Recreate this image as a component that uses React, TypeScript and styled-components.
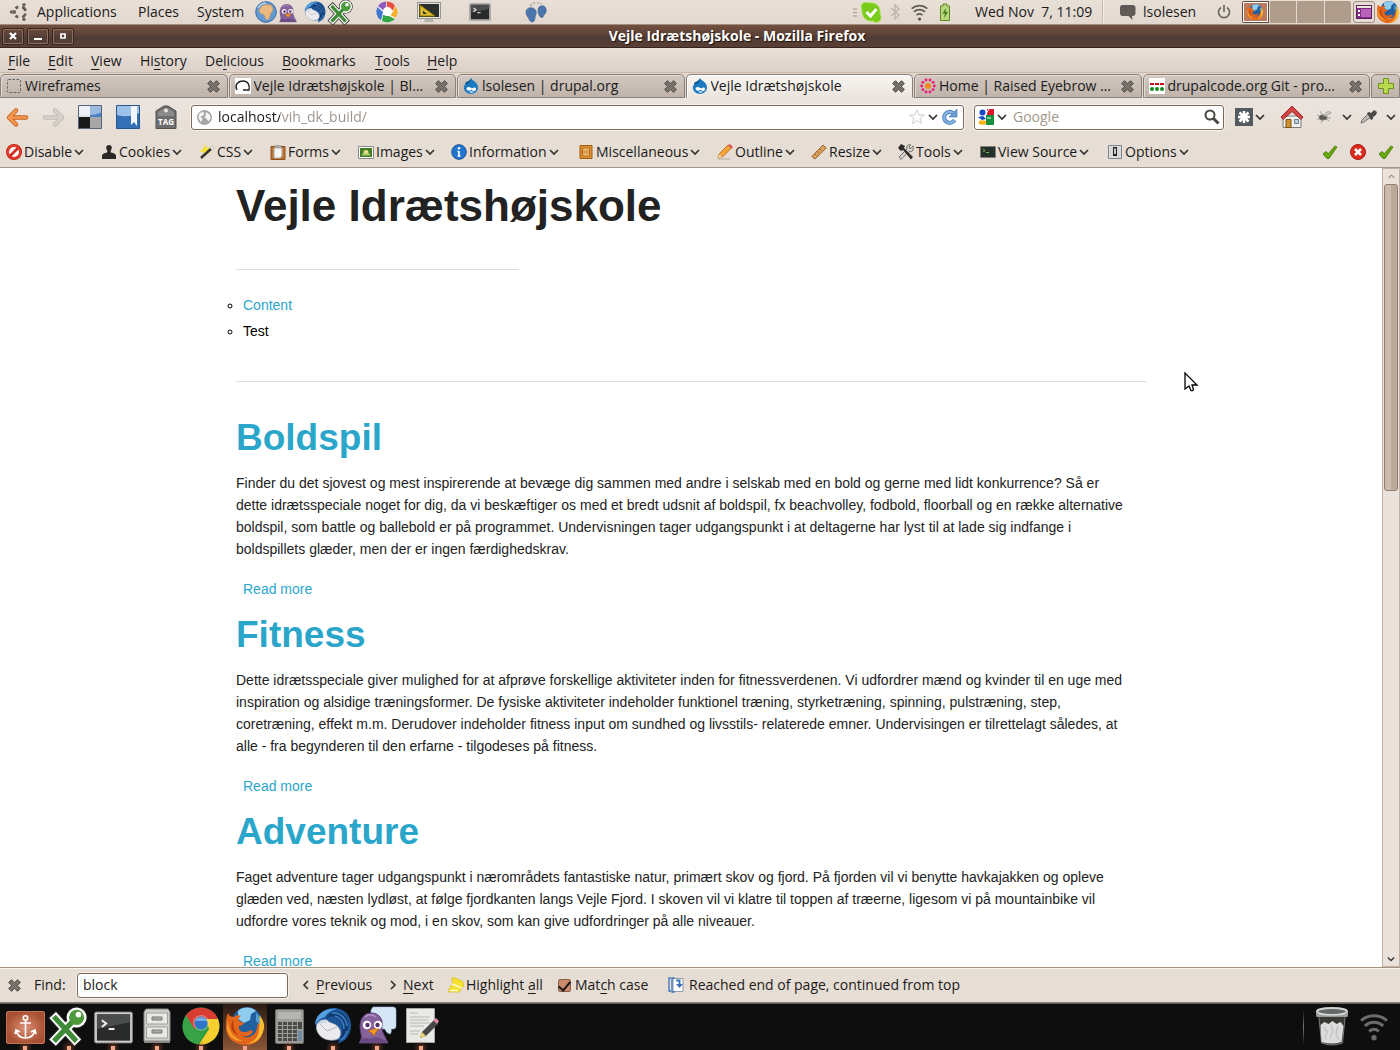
import React from "react";
import styled, { createGlobalStyle } from "styled-components";

const uiFont = '"Open Sans", "Noto Sans", sans-serif';
const pageFont = '"Liberation Sans", Arial, sans-serif';

const GlobalStyle = createGlobalStyle`
  * { box-sizing: border-box; }
  body { margin: 0; background: #0e0e0e; font-family: ${uiFont}; font-size: 14px; line-height: 20px; font-weight: 500; color: #1a1a1a; }
  button, input { font: inherit; color: inherit; }
  button { border: 0; background: none; padding: 0; margin: 0; }
  svg { display: block; flex: none; overflow: visible; }
`;

/* ---------- Shell ---------- */

const Desktop = styled.div`
  display: flex;
  flex-direction: column;
  height: 100vh;
  overflow: hidden;
`;

const TopPanel = styled.header`
  display: flex;
  justify-content: space-between;
  height: 25px;
  flex: none;
  background: linear-gradient(#e8dfd7, #e2d8cf);
  border-bottom: 1px solid #a08f80;
`;

const PanelGroup = styled.div`
  display: flex;
  align-items: center;
`;

const Slot = styled.div<{ $w: number; $center?: boolean }>`
  display: flex;
  align-items: center;
  justify-content: ${(p) => (p.$center ? "center" : "flex-start")};
  width: ${(p) => p.$w}px;
  flex: none;
  white-space: nowrap;
`;

const SlotButton = styled(Slot).attrs({ as: "button" })``;

const PanelRule = styled.span`
  width: 2px;
  height: 22px;
  border-left: 1px solid #c4b7aa;
  border-right: 1px solid #f4efea;
`;

const Workspaces = styled.div`
  display: grid;
  grid-template-columns: repeat(4, 1fr);
  gap: 1px;
  width: 109px;
  height: 22px;
  background: #e3d9cf;
  border-radius: 2px;
  overflow: hidden;
`;

const Workspace = styled.button<{ $active?: boolean }>`
  display: flex;
  align-items: center;
  justify-content: center;
  background: ${(p) => (p.$active ? "#bd7a5c" : "#b09c8b")};
  border: ${(p) => (p.$active ? "2px solid #fff" : "0")};
  outline: ${(p) => (p.$active ? "1px solid #5c4a40" : "none")};
  outline-offset: -1px;
`;

const WindowsButton = styled.button`
  display: flex;
  align-items: center;
  justify-content: center;
  width: 22px;
  height: 22px;
  margin: 0 2px;
  border: 1px solid #a08f80;
  border-radius: 3px;
  background: #e6dcd3;
`;

const TitleBar = styled.div`
  display: flex;
  align-items: center;
  height: 23px;
  flex: none;
  padding: 0 2px;
  background: linear-gradient(#74503f, #5c4238 45%, #503c34 55%, #593f35);
  border-bottom: 1px solid #38241f;
`;

const WindowButtons = styled.div`
  display: flex;
  gap: 3px;
  width: 74px;
`;

const WindowButton = styled.button`
  display: flex;
  align-items: center;
  justify-content: center;
  width: 22px;
  height: 17px;
  border: 1px solid #35231d;
  border-radius: 2px;
  box-shadow: inset 0 0 0 1px #8c6f61;
`;

const WindowTitle = styled.h1`
  flex: 1;
  margin: 0;
  text-align: center;
  font-size: 14px;
  line-height: 20px;
  font-weight: 700;
  color: #fff;
  text-shadow: 1px 1px 1px #1c100c;
`;

const MenuBar = styled.nav`
  display: flex;
  align-items: center;
  height: 25px;
  flex: none;
  padding: 2px 0 0 8px;
  background: linear-gradient(#e9dfd8, #ddd1c8);
  border-bottom: 1px solid #cdb9a8;

  u { text-underline-offset: 3px; }
`;

/* ---------- Tabs ---------- */

const TabStrip = styled.div`
  display: flex;
  height: 25px;
  flex: none;
  padding-top: 1px;
  gap: 1px;
  background: #e0d6cd;
`;

const Tab = styled.div<{ $active?: boolean }>`
  display: flex;
  align-items: center;
  flex: 1 1 0;
  min-width: 0;
  gap: 3px;
  padding: 0 7px 0 5px;
  border: 1px solid #8d8078;
  border-bottom: 1px solid ${(p) => (p.$active ? "#ece5df" : "#8d8078")};
  border-radius: 5px 5px 0 0;
  background: ${(p) => (p.$active ? "linear-gradient(#f8f5f2, #ece5df)" : "linear-gradient(#d2c8c0, #bfb3aa)")};
  box-shadow: inset 1px 1px 0 ${(p) => (p.$active ? "#fff" : "#e2dad3")};
`;

const TabLabel = styled.span`
  flex: 1;
  min-width: 0;
  overflow: hidden;
  white-space: nowrap;
`;

const NewTab = styled.button`
  display: flex;
  align-items: center;
  justify-content: center;
  width: 29px;
  border: 1px solid #8d8078;
  border-radius: 5px 5px 0 0;
  background: linear-gradient(#d2c8c0, #bfb3aa);
`;

/* ---------- Toolbars ---------- */

const NavBar = styled.div`
  display: flex;
  align-items: center;
  height: 38px;
  flex: none;
  padding-left: 6px;
  background: linear-gradient(#ece5df, #e6ddd4);
`;

const Field = styled.div<{ $w?: number }>`
  display: flex;
  align-items: center;
  gap: 6px;
  height: 25px;
  flex: ${(p) => (p.$w ? "none" : "1")};
  width: ${(p) => (p.$w ? `${p.$w}px` : "auto")};
  min-width: 0;
  padding: 0 5px;
  border: 1px solid #7c6a5c;
  border-radius: 3px;
  background: #fff;
  box-shadow: 0 0 0 1px #f5f1ed;
`;

const SearchField = styled(Field)`
  padding: 0 3px;
`;

const FieldIcons = styled.div`
  display: flex;
  align-items: center;
  gap: 3px;
`;

const TextInput = styled.input`
  flex: 1;
  min-width: 0;
  width: 100%;
  padding: 0;
  border: 0;
  outline: 0;
  background: transparent;
  &::placeholder { color: #a3978c; opacity: 1; }
`;

const UrlInput = styled(TextInput)`
  color: transparent;
  background: linear-gradient(90deg, #1a1a1a 62px, #9a918a 62px);
  background-clip: text;
  -webkit-background-clip: text;
`;

const NavTail = styled.div`
  display: flex;
  align-items: center;
  padding-left: 10px;
`;

const DevBar = styled.div`
  display: flex;
  align-items: center;
  justify-content: space-between;
  height: 32px;
  flex: none;
  padding: 0 6px;
  background: #e6ddd4;
  border-bottom: 1px solid #a39382;
`;

const DevItem = styled.button<{ $w: number }>`
  display: flex;
  align-items: center;
  gap: 2px;
  width: ${(p) => p.$w}px;
  white-space: nowrap;
`;

const Status = styled.div`
  display: flex;
  gap: 12px;
`;

/* ---------- Document ---------- */

const Viewport = styled.div`
  position: relative;
  display: flex;
  flex: 1;
  min-height: 0;
  background: #fff;
`;

const Document = styled.main`
  flex: 1;
  min-width: 0;
  overflow: hidden;
  font-family: ${pageFont};
  font-weight: 400;
  color: #222;
`;

const Column = styled.div`
  max-width: 910px;
  margin: 0 auto;
`;

const SiteTitle = styled.h1`
  margin: 0;
  padding-top: 14px;
  font-size: 44px;
  line-height: 48px;
`;

const Rule = styled.hr<{ $short?: boolean }>`
  width: ${(p) => (p.$short ? "283px" : "100%")};
  margin: ${(p) => (p.$short ? "39px 0 22px" : "37px 0 32px")};
  border: 0;
  border-top: 1px solid #ddd;
`;

const NavList = styled.ul`
  margin: 0;
  padding: 0 0 0 7px;
  list-style: circle;
  color: #000;
  line-height: 26px;
`;

const Link = styled.a`
  color: #2ba6cb;
  text-decoration: none;
`;

const Article = styled.article``;

const ArticleTitle = styled.h2`
  margin: 0;
  padding-bottom: 10px;
  font-size: 37px;
  line-height: 48px;
`;

const Paragraph = styled.p`
  margin: 0 0 18px;
  line-height: 22px;
`;

const ReadMore = styled.p`
  margin: 0 0 11px;
  padding-left: 7px;
  line-height: 22px;
`;

const ScrollBar = styled.div`
  display: flex;
  flex-direction: column;
  width: 18px;
  padding: 0 1px;
  border: 1px solid #c3b2a3;
  background: #ebe2dc;
`;

const ScrollButton = styled.button`
  display: flex;
  align-items: center;
  justify-content: center;
  height: 15px;
`;

const Track = styled.div`
  flex: 1;
`;

const Thumb = styled.div`
  height: 40%;
  border: 1px solid #8f7d6f;
  border-radius: 3px;
  background: linear-gradient(90deg, #cbbcaf 50%, #bba99a 50%);
`;

const Pointer = styled.div`
  position: absolute;
  left: 1184px;
  top: 204px;
`;

/* ---------- Find bar and dock ---------- */

const FindBar = styled.form`
  display: flex;
  align-items: center;
  height: 36px;
  flex: none;
  padding-left: 8px;
  border-top: 1px solid #a39382;
  border-bottom: 1px solid #8c7c6e;
  background: #e6ddd4;
  box-shadow: inset 0 1px 0 #f8f5f2;

  u { text-underline-offset: 3px; }
`;

const FindLabel = styled.label`
  width: 43px;
`;

const FindField = styled(Field)`
  margin-right: 13px;
`;

const FindAction = styled.button<{ $w: number; $gap?: number }>`
  display: flex;
  align-items: center;
  gap: ${(p) => p.$gap ?? 5}px;
  width: ${(p) => p.$w}px;
  white-space: nowrap;
`;

const CheckLabel = styled.label`
  display: flex;
  align-items: center;
  gap: 4px;
  width: 110px;
`;

const CheckBox = styled.input`
  appearance: none;
  width: 13px;
  height: 13px;
  margin: 0;
  border: 1px solid #8d5f4a;
  border-radius: 2px;
  background: #cc8a6c;
  display: grid;
  place-content: center;
  &:checked::before {
    content: "";
    width: 5px;
    height: 10px;
    border: solid #1a1a1a;
    border-width: 0 2px 2px 0;
    transform: rotate(40deg);
  }
`;

const FindMessage = styled.output`
  display: flex;
  align-items: center;
  gap: 5px;
  white-space: nowrap;
`;

const Dock = styled.footer`
  display: flex;
  justify-content: space-between;
  height: 47px;
  flex: none;
  padding: 0 0 0 3px;
  background: #0e0e0e;
  border-top: 1px solid #5d6560;
`;

const DockGroup = styled.div`
  display: flex;
  align-items: stretch;
`;

const DockItem = styled.button<{ $active?: boolean }>`
  display: flex;
  flex-direction: column;
  align-items: center;
  justify-content: space-between;
  width: 44px;
  padding-top: 3px;
  background: ${(p) => (p.$active ? "linear-gradient(#2a1a12, #8a5638)" : "none")};
`;

const RunningDot = styled.span`
  width: 4px;
  height: 4px;
  background: #f0a588;
  box-shadow: 0 0 5px 1px #a65336;
`;

const Tray = styled.div`
  display: flex;
  align-items: center;
  gap: 12px;
  padding-right: 12px;
`;

const TrayRule = styled.span`
  width: 1px;
  height: 36px;
  background: linear-gradient(#0e0e0e, #777, #0e0e0e);
`;

/* ---------- Drawings ---------- */

type Box = { s?: number };

const Chevron = ({ dir = "down", c = "#333", s = 10 }: { dir?: string; c?: string; s?: number }) => {
  const d: Record<string, string> = {
    down: "M1 3l4 4 4-4",
    up: "M1 7l4-4 4 4",
    left: "M7 1L3 5l4 4",
    right: "M3 1l4 4-4 4",
  };
  return (
    <svg width={s} height={s} viewBox="0 0 10 10" fill="none" stroke={c} strokeWidth="1.7"><path d={d[dir]} /></svg>
  );
};

const CloseMark = () => (
  <svg width="13" height="13" viewBox="0 0 13 13">
    <path d="M3.5 .7l3 3 3-3 2.8 2.8-3 3 3 3-2.8 2.8-3-3-3 3L.7 9.5l3-3-3-3z" fill="#77716c" stroke="#4e4843" />
  </svg>
);

const UbuntuMark = () => (
  <svg width="20" height="20" viewBox="0 0 20 20" fill="none" stroke="#665f5a">
    <path d="M6.6 6.5A5.600 5.600 0 0 1 9.300 4.900M13.200 4.900A5.600 5.600 0 0 1 16.500 9M16.500 11.500A5.600 5.600 0 0 1 13.200 15.200M9.300 15.200A5.600 5.600 0 0 1 6.600 13.600M5.700 11.800A5.600 5.600 0 0 1 5.700 8.300" strokeWidth="2.800" />
    <g fill="#665f5a" stroke="none"><circle cx="2.500" cy="10" r="1.700" /><circle cx="15" cy="2.600" r="1.700" /><circle cx="15" cy="17.400" r="1.700" /></g>
  </svg>
);

const Globe = ({ s = 22, grey = false }: Box & { grey?: boolean }) => (
  <svg width={s} height={s} viewBox="0 0 22 22">
    <circle cx="11" cy="11" r="10.3" fill={grey ? "#a6a6a6" : "#6199d3"} stroke={grey ? "#8e8e8e" : "#356ba8"} />
    {grey ? (
      <path d="M3 6l4-3 4 1-2 4-4 2 3 3-2 5-4-6zM13 3l6 4 1 5-3 5-3-4-3-2 2-4z" fill="#f4f4f4" />
    ) : (
      <>
        <path d="M6 6c3-3 8-3 11-1l1 4-2 3-2 6-3 1-2-5-4-2-1-3z" fill="#eab880" stroke="#c08e55" strokeWidth=".6" />
        <path d="M3 7a10 10 0 0 1 8-5" fill="none" stroke="#fff" strokeWidth="1.5" opacity=".6" />
      </>
    )}
  </svg>
);

const Pidgin = ({ s = 22, bubble = false }: Box & { bubble?: boolean }) => (
  <svg width={s} height={s} viewBox="0 0 38 38">
    {bubble && <path d="M15 0h20q3 0 3 3v16q0 3-3 3h-2q1 3-1 5-4-1-5-5H13V3z" fill="#d5e6f7" stroke="#a3bfdc" strokeWidth=".6" />}
    <path d="M1 36c2-3 3-5 2-9C0 15 4 6 13 6c8 0 12 6 11 13-1 5 3 10 6 17z" fill="#85629b" stroke="#5b3d72" />
    <path d="M7 10c3-3 8-3 11 0" fill="none" stroke="#b294c6" strokeWidth="1.5" />
    <path d="M3 32c6-3 7 1 11-1s9 0 14 3l1 2H2z" fill="#694b82" />
    <circle cx="9" cy="18" r="4.2" fill="#fff" /><circle cx="20" cy="18" r="4.2" fill="#fff" />
    <circle cx="9.500" cy="18" r="2.2" fill="#553270" /><circle cx="19.500" cy="18" r="2.2" fill="#553270" />
    <path d="M10 24l5-2 6 0-3 3-2 4-2-3z" fill="#f29a22" stroke="#ba5d0d" strokeWidth=".7" />
  </svg>
);

const Thunderbird = ({ s = 22 }: Box) => (
  <svg width={s} height={s} viewBox="0 0 38 38">
    <path d="M7 6C14-1 28-1 34 8c5 8 4 18-3 25l-7 4 1-4C17 35 8 32 4 25 0 19 2 11 7 6z" fill="#1d5496" />
    <path d="M1 18C1 8 11 0 23 2c-6 1-10 4-12 8-4 1-7 3-10 8z" fill="#55a1df" />
    <path d="M3 17c2-4 7-5 10-4 2 3 6 3 9 5 5 4 6 9 3 13-4 3-11 3-16 0-5-3-8-9-6-14z" fill="#ebebed" stroke="#9da8b7" strokeWidth=".6" />
    <path d="M5 16l8 8 10-4" fill="none" stroke="#b4b6bc" />
    <path d="M3 17c3-3 7-4 10-4l-1 3z" fill="#c9d6e6" />
    <path d="M12 11c7-4 14 0 16 7 1 5 0 10-3 14 8-3 11-12 8-20C29 3 18 3 12 11z" fill="#12396e" />
    <path d="M18 6c8-1 14 5 15 13M21 9c6 2 9 7 9 13M33 24c-1 4-3 7-6 9" fill="none" stroke="#3d83ca" strokeWidth="1.5" />
  </svg>
);

const XMark = ({ s = 24 }: Box) => (
  <svg width={s} height={s} viewBox="0 0 40 40">
    <g fill="none" strokeLinecap="square">
      <path d="M6 12l20 22M6 34l20-21" stroke="#222" strokeWidth="12" />
      <circle cx="28" cy="11" r="11.5" fill="#222" />
      <path d="M6 12l20 22M6 34l20-21" stroke="#fff" strokeWidth="9.5" />
      <circle cx="28" cy="11" r="10.5" fill="#fff" />
      <path d="M6 12l20 22M6 34l20-21" stroke="#3f8a36" strokeWidth="5.5" />
    </g>
    <circle cx="28" cy="11" r="8" fill="#4d9b3d" /><circle cx="30" cy="8" r="3" fill="#fff" />
  </svg>
);

const Picasa = () => (
  <svg width="22" height="22" viewBox="0 0 22 22">
    <circle cx="11" cy="11" r="10.5" fill="#fff" />
    <path d="M10 .5A10.500 10.500 0 0 0 2 5l6 5 2-4z" fill="#8f5bc0" />
    <path d="M10.500 .5a10.500 10.500 0 0 1 8.500 4l-2 5-6-3z" fill="#e74f43" />
    <path d="M19.500 5a10.500 10.500 0 0 1 0 12l-5-3 3-4z" fill="#f4ae28" />
    <path d="M19 18a10.500 10.500 0 0 1-13 2l1-6 6 1z" fill="#36a544" />
    <path d="M5 19.500A10.500 10.500 0 0 1 1.500 6L7 11z" fill="#4076ce" />
    <circle cx="11.500" cy="10.500" r="4.5" fill="#fff" />
  </svg>
);

const ScreenRuler = () => (
  <svg width="24" height="22" viewBox="0 0 24 22">
    <rect x=".5" y="1.500" width="23" height="16" fill="#e4e4e0" stroke="#96968f" />
    <rect x="2" y="3" width="20" height="13" fill="#2c2f2c" />
    <path d="M3 4l15 11H3z" fill="#dec02f" stroke="#8b7209" /><path d="M6 9.500l4 3.500H6z" fill="#2c2f2c" />
    <path d="M8 18h8l1 3H7z" fill="#b5b5b0" />
  </svg>
);

const Terminal = ({ w = 22, h = 18 }: { w?: number; h?: number }) => (
  <svg width={w} height={h} viewBox="0 0 40 33">
    <rect x=".7" y=".7" width="38.600" height="31.600" rx="1.500" fill="#cfcfcb" stroke="#8a8a86" />
    <rect x="3" y="3" width="34" height="27" fill="#292b2a" /><path d="M3 3h34v8L3 18z" fill="#4a4c4b" />
    <path d="M8 9l4.500 3.500L8 16M15 18h6" stroke="#f0f0f0" strokeWidth="2" fill="none" />
  </svg>
);

const Feet = () => (
  <svg width="22" height="22" viewBox="0 0 22 22">
    <path d="M1 11c0-5 8-6 10-1 1 3-1 4-1 7 0 5-5 5-6 1-1-2-3-4-3-7z" fill="#4b76ad" stroke="#34598b" strokeWidth=".6" />
    <path d="M13 9c0-5 7-6 8-1 1 4-2 5-3 8-3 2-5-3-5-7z" fill="#4b76ad" stroke="#34598b" strokeWidth=".6" />
    <g fill="#bdb7ae"><circle cx="6" cy="4" r="1.3" /><circle cx="9" cy="2" r="1.3" /><circle cx="13" cy="2" r="1.3" /><circle cx="16" cy="2.500" r="1" /></g>
  </svg>
);

const PhoneStatus = () => (
  <svg width="21" height="21" viewBox="0 0 21 21">
    <path d="M2 1c3-1 5 0 6 0 7-1 12 4 11 11 2 3 1 7-2 8-2 1-4 0-5-1C5 20 1 15 1 8 0 5 0 3 2 1z" fill="#79cc1b" stroke="#a6e356" />
    <path d="M5.500 10l4 4 6-7" fill="none" stroke="#fff" strokeWidth="3" />
  </svg>
);

const Bluetooth = () => (
  <svg width="10" height="16" viewBox="0 0 10 16" fill="none" stroke="#c0b8b0" strokeWidth="1.500"><path d="M1 4l8 7-4 4V1l4 4-8 7" /></svg>
);

const Wifi = ({ w = 17, c = "#625c57" }: { w?: number; c?: string }) => (
  <svg width={w} height={w} viewBox="0 0 26 26" fill="none" stroke={c} strokeWidth="2.7">
    <path d="M1 7c7-6 17-6 24 0M4.500 12c5-4.500 12-4.500 17 0M8.500 17c3-2.500 6-2.500 9 0" /><circle cx="13" cy="23" r="2.5" fill={c} stroke="none" />
  </svg>
);

const Battery = () => (
  <svg width="10" height="18" viewBox="0 0 10 18"><path d="M3 1h4v2h2.500v14.500h-9V3H3z" fill="#b9d67d" stroke="#5c8a20" /><path d="M6 5L2.500 10.500H5L4 15l4-6H5.500z" fill="#45791a" /></svg>
);

const Bubble = () => (
  <svg width="16" height="15" viewBox="0 0 16 15"><path d="M2.500 0h10q3 0 3 3v5q0 3-3 3H12l.5 4-4-4h-6q-2.500 0-2.500-3V3q0-3 2.500-3z" fill="#5f5a56" /></svg>
);

const Power = () => (
  <svg width="14" height="14" viewBox="0 0 14 14" fill="none" stroke="#6d6762" strokeWidth="1.700"><path d="M4 2.500a5.500 5.500 0 1 0 6 0M7 0v7" /></svg>
);

const Firefox = ({ s = 22 }: Box) => (
  <svg width={s} height={s} viewBox="0 0 38 38">
    <circle cx="21" cy="15" r="15" fill="#225f9f" />
    <path d="M12 4c6-5 14-4 18 0l-5 3-1 6-6 3-6-4z" fill="#8fcdf0" />
    <path d="M30 6c3 2 5 7 4 12l-4-4z" fill="#4f9cd6" />
    <path d="M2 6c1 3 3 4 6 4 2-2 5-2 7-1-2 1-3 3-2 5l5 2c-1 2-3 3-5 3-1 4 3 7 7 6 3-1 5-2 7-1-1 4-6 6-11 5 7 4 14-1 15-8l1-5c4 3 5 8 4 12-3 7-9 10-16 10C8 38 0 30 0 21 0 15 0 10 2 6z" fill="#e5661a" />
    <path d="M33 8c5 5 7 12 3 19-3 7-10 10-16 10 9-2 13-8 13-15 1-5 1-10 0-14z" fill="#f9bd32" />
    <path d="M2 13c0 10 5 18 15 21C8 35 1 28 1 20z" fill="#f6a02a" />
    <path d="M8 12c-2 6 0 13 5 16-8-2-10-10-5-16z" fill="#b63b12" />
  </svg>
);

const WindowList = () => (
  <svg width="16" height="14" viewBox="0 0 16 14"><rect x=".5" y=".5" width="15" height="13" fill="#7d2c84" stroke="#5c1f62" /><path d="M1 1h14v2H1z" fill="#ede8da" /><path d="M2 5h2v2H2zM2 9h2v2H2z" fill="#fff" /><path d="M5 4h10v8H5z" fill="#ba62b9" /></svg>
);

const Dashed = () => (
  <svg width="16" height="16" viewBox="0 0 16 16"><rect x="1.500" y="1.500" width="13" height="13" rx="1" fill="none" stroke="#65605b" strokeDasharray="2.500 1.500" /></svg>
);

const Arch = () => (
  <svg width="16" height="16" viewBox="0 0 16 16"><path d="M0 0h16v16H0z" fill="#fff" /><path d="M2 12C-1 6 4 3 8 3c5 0 7 4 6 9H8" fill="none" stroke="#222" strokeWidth="1.500" /></svg>
);

const Drupal = () => (
  <svg width="16" height="16" viewBox="0 0 16 16"><path d="M8 0c1 3 7 4 7 9.500C15 13 12 16 8 16S.8 13 .8 9.500C1 5 7 4 8 0z" fill="#1b7ac2" /><path d="M2 5c3-2 5-2 6-5 0 4-3 6-5 7z" fill="#075892" /><path d="M3.500 10c2-2 4-1 5.500.5 2-1.500 4-1.500 4 .5 0 3-3 2-4.500.7-2 1.500-5 1.500-5-1.700zM6 14c2-1 3-1 5 0-2 1-3 1-5 0z" fill="#fff" /></svg>
);

const Sunburst = () => (
  <svg width="16" height="16" viewBox="0 0 16 16">
    {Array.from({ length: 10 }, (_, i) => {
      const a = (i * Math.PI) / 5;
      return <circle key={i} cx={8 + 6.3 * Math.cos(a)} cy={8 + 6.3 * Math.sin(a)} r="1.4" fill="#ec1c76" />;
    })}
    <circle cx="8" cy="8" r="3" fill="#f58a1f" />
  </svg>
);

const GitMark = () => (
  <svg width="16" height="16" viewBox="0 0 16 16"><path d="M0 0h16v16H0z" fill="#fff" /><path d="M1 6h14" stroke="#c30d1c" strokeWidth="2" strokeDasharray="4 1" /><g fill="#12891c"><circle cx="3" cy="11" r="2" /><circle cx="8" cy="11" r="2" /><circle cx="13" cy="11" r="2" /></g></svg>
);

const Plus = () => (
  <svg width="16" height="16" viewBox="0 0 16 16"><path d="M5.500 .5h5v5h5v5h-5v5h-5v-5h-5v-5h5z" fill="#b8d84e" stroke="#6d9221" /></svg>
);

const Arrow = ({ off = false }: { off?: boolean }) => (
  <svg width="23" height="19" viewBox="0 0 23 19" fill="none" strokeLinecap="round" strokeLinejoin="round">
    <g transform={off ? "translate(23 0) scale(-1 1)" : undefined}>
      <path d="M10 2.500L3 9.500l7 7M4 9.500h16" stroke={off ? "#c2b9b2" : "#c9601d"} strokeWidth="4.500" />
      <path d="M10 2.500L3 9.500l7 7M4 9.500h16" stroke={off ? "#d8d0ca" : "#f49650"} strokeWidth="2.700" />
    </g>
  </svg>
);

const Checker = () => (
  <svg width="24" height="24" viewBox="0 0 24 24"><path d="M0 0h12v12H0z" fill="#e0e6ee" /><path d="M12 0h12v12H12z" fill="#4b82c6" /><path d="M0 12h12v12H0z" fill="#181818" /><path d="M12 12h12v12H12z" fill="#a7a7a7" /><path d="M0 0h24v7C15 11 8 11 0 9z" fill="#fff" opacity=".45" /><path d="M.5 .5h23v23H.5z" fill="none" stroke="#556579" /></svg>
);

const BookmarkTile = () => (
  <svg width="24" height="24" viewBox="0 0 24 24"><path d="M.5 .5h23v23H.5z" fill="#3470b6" stroke="#285691" /><path d="M1 1h22v7C15 12 8 12 1 10z" fill="#9dc2e9" /><path d="M15 1h6v20l-3-4-3 3z" fill="#f3f7fb" /></svg>
);

const TagTile = () => (
  <svg width="22" height="24" viewBox="0 0 22 24">
    <path d="M1 6l8-5h4l8 5v17.500H1z" fill="#6d6d6d" stroke="#515151" /><path d="M3 7l7-4h2l7 4v4H3z" fill="#8a8a8a" /><circle cx="11" cy="5.500" r="2" fill="#ece5df" />
    <text x="11" y="20" textAnchor="middle" fontSize="8" fontWeight="700" fontFamily="Open Sans, sans-serif" fill="#fff">TAG</text>
  </svg>
);

const Star = () => (
  <svg width="16" height="16" viewBox="0 0 16 16"><path d="M8 1l2 5h5.300l-4.200 3.400 1.500 5.300L8 11.600l-4.600 3.100 1.500-5.300L.7 6H6z" fill="#fff" stroke="#cfcfcf" /></svg>
);

const Reload = () => (
  <svg width="17" height="17" viewBox="0 0 17 17"><path d="M13.500 11A5.500 5.500 0 1 1 12 4" fill="none" stroke="#4a7ebb" strokeWidth="4" /><path d="M13.500 11A5.500 5.500 0 1 1 12 4" fill="none" stroke="#88b3e2" strokeWidth="2.200" /><path d="M16 0v8H8z" fill="#6c9cd2" stroke="#4a7ebb" strokeWidth=".7" /></svg>
);

const SearchEngine = () => (
  <svg width="16" height="16" viewBox="0 0 16 16"><path d="M0 0h8v16H0z" fill="#fff" /><path d="M9 0h7v6H9z" fill="#e2122d" /><path d="M8 6h8v10H8z" fill="#13913e" /><circle cx="4.500" cy="3.500" r="3" fill="#1549c8" /><path d="M0 8l5-1 3 3-4 1z" fill="#1549c8" /><ellipse cx="4.500" cy="13.500" rx="3.800" ry="2.300" fill="#f5b516" /><path d="M8 5l3-5M9 9l4 0" stroke="#fff" /></svg>
);

const Magnifier = () => (
  <svg width="16" height="16" viewBox="0 0 16 16" fill="none" stroke="#4a4642"><circle cx="6" cy="6" r="4.500" strokeWidth="2" /><path d="M9.500 9.500l5 5" strokeWidth="3" /></svg>
);

const Asterisk = () => (
  <svg width="18" height="18" viewBox="0 0 18 18"><path d="M0 0h18v18H0z" fill="#535b61" /><path d="M9 3v12M3 9h12M4.500 4.500l9 9M13.500 4.500l-9 9" stroke="#fff" strokeWidth="2.500" /></svg>
);

const Home = () => (
  <svg width="24" height="24" viewBox="0 0 24 24"><path d="M3 11h18v11.500H3z" fill="#efefed" stroke="#7d7d79" /><path d="M12 1l11 11-2 2.500-9-8-9 8L1 12z" fill="#d34545" stroke="#9b2626" /><path d="M6 14.500h5v8H6z" fill="#cf912c" stroke="#7e540c" /><path d="M14.500 14.500h4v4h-4z" fill="#b7d1e8" stroke="#6b7e8e" /></svg>
);

const Bug = () => (
  <svg width="16" height="14" viewBox="0 0 16 14" fill="none" stroke="#a39f9b"><path d="M1 5l5 2-5 3M4 1l3 5M15 8l-5 0M13 11l-4-3M5 13l2-4" /><ellipse cx="7" cy="7.500" rx="4" ry="2.500" fill="#5d5a57" stroke="#77736f" /><path d="M8 6c2-5 6-5 7-3l-5 3z" fill="#d5d2cf" /></svg>
);

const Dropper = () => (
  <svg width="17" height="14" viewBox="0 0 17 14"><path d="M1 13l1-3 6-6 3 3-7 5z" fill="#bdbab6" stroke="#77736f" /><path d="M7 3l2-1 2 1 3-3 3 2-1 3-3 2 0 2-2 1z" fill="#4b4845" /></svg>
);

const Check = () => (
  <svg width="16" height="16" viewBox="0 0 16 16"><path d="M1 10l2.500-2.500 3 2L13 2l2 1L7 14.500H5z" fill="#65a80c" stroke="#3f7300" strokeWidth=".8" /></svg>
);

const ErrorDot = () => (
  <svg width="16" height="16" viewBox="0 0 16 16"><circle cx="8" cy="8" r="7.500" fill="#dc2a1c" stroke="#ad1a10" /><path d="M5 5l6 6M11 5l-6 6" stroke="#fff" strokeWidth="2.500" /></svg>
);

const devIcons: Record<string, React.ReactNode> = {
  Disable: <><circle cx="8" cy="8" r="6.500" fill="#fff" stroke="#bc1d10" strokeWidth="3" /><circle cx="8" cy="8" r="6.300" fill="none" stroke="#ec4031" strokeWidth="1.800" /><path d="M4 12l8-8" stroke="#d62a1c" strokeWidth="2.600" /></>,
  Cookies: <path d="M8 1c3 0 3.500 3 2 5-1 2 0 3 2 3 2 .5 3 1.500 3 3v3H1v-3c0-1.500 1-2.500 3-3 2 0 3-1 2-3-1.500-2-1-5 2-5z" fill="#2b2927" />,
  CSS: <><path d="M6 0l1.500 4 4-1-3 3 3 3.500-4-1L5 12l-.5-4L0 7l4-2z" fill="#f8df37" /><path d="M2 14L14 3" stroke="#393530" strokeWidth="2.500" /><path d="M12 5l2-2" stroke="#f3f3f3" strokeWidth="2.500" /></>,
  Forms: <><path d="M1 2.500h14v13H1z" fill="#c07431" stroke="#8c4f17" /><path d="M4 4h8v8l-2 2H4z" fill="#f5f5f3" stroke="#aaa" /><path d="M5 1h6v3H5z" fill="#a9a9a5" /></>,
  Images: <><path d="M.5 2.500h15v12H.5z" fill="#fff" stroke="#888" /><path d="M2 4h12v9H2z" fill="#437d26" /><circle cx="8" cy="8.500" r="2.500" fill="#e9e28b" /><path d="M4 10.500h8" stroke="#a7cc72" strokeWidth="2" /></>,
  Information: <><circle cx="8" cy="8" r="7.300" fill="#2376ce" stroke="#135096" /><path d="M8 7v5M6.500 7.500H8M6.500 12h3" stroke="#fff" strokeWidth="1.700" /><circle cx="8" cy="4.200" r="1.200" fill="#fff" /></>,
  Miscellaneous: <><path d="M2 1.500h12v13H2z" fill="#dc8f35" stroke="#a45c12" /><path d="M4.500 4h7v8h-7z" fill="#f1bd70" stroke="#b56c1d" /><path d="M5 7h6M5 9h6" stroke="#b56c1d" strokeWidth=".7" /></>,
  Outline: <><path d="M2 15h11" stroke="#b5aaa0" /><path d="M1 14.500l1.500-5L11 1l3.500 3L6 12.500z" fill="#f6a437" stroke="#b86712" strokeWidth=".8" /><path d="M11 1l2-1 3 3-1.500 1.500z" fill="#d9535a" /><path d="M1 14.500l1.500-4 2.500 2.500z" fill="#f3dcb6" /></>,
  Resize: <><path d="M.8 12.500L12 1l3.300 3L4 15z" fill="#dda45f" stroke="#9a642a" /><path d="M4 10l1.500 1.500M6.500 7.500L8 9M9 5l1.500 1.500" stroke="#85531d" /></>,
  Tools: <><path d="M15 2l-3 3-1-2 2-2c-3-1-5 1-4 4l-8 8 2 2.500 8-8c3 1 5-1 4-5.500z" fill="#d3d1ce" stroke="#5b5855" strokeWidth=".8" /><path d="M0 4l3-4 4 2-1 2 9 9-2 2.500L5 6 3 7z" fill="#2e2c2a" /></>,
  "View Source": <><path d="M.5 2.500h15v11H.5z" fill="#26302a" stroke="#7f7f7b" /><path d="M3 5l2 1.500L3 8M6 8.500h3" stroke="#70bd52" fill="none" /></>,
  Options: <><path d="M1.500 1.500h13v13h-13z" fill="#d9d9dc" stroke="#85858a" /><path d="M6 3h4v9H6z" fill="#222" /><path d="M7.200 4.500h1.600V10H7.200z" fill="#f3f3f3" /></>,
};

const Highlighter = () => (
  <svg width="16" height="16" viewBox="0 0 16 16"><path d="M4 1q1-1 3 0l7 3q2 2 1.500 5l-3 4-1 2H1q-.500-2 .500-4l3-4z" fill="#f6e032" stroke="#d8bf26" strokeWidth=".8" /><path d="M4 7l10 4M2 13.500h8" stroke="#fffbd0" strokeWidth="1.500" /></svg>
);

const WrapIcon = () => (
  <svg width="16" height="16" viewBox="0 0 16 16"><path d="M5 1.500h10v13H5z" fill="#fff" stroke="#8f9aa9" /><path d="M3 1H1v13h2M6.500 1H4v14h2.500" fill="none" stroke="#3f74b7" strokeWidth="1.300" /><path d="M8 3.500h3.500v4" fill="none" stroke="#3f74b7" strokeWidth="2" /><path d="M8 7h7l-3.500 4z" fill="#3f74b7" /></svg>
);

const Anchor = () => (
  <svg width="39" height="38" viewBox="0 0 39 38">
    <defs><radialGradient id="anchorGlow"><stop stopColor="#dd9077" /><stop offset="1" stopColor="#a85132" /></radialGradient></defs>
    <rect x=".5" y="4.500" width="38" height="32" rx="1.500" fill="url(#anchorGlow)" stroke="#c47356" />
    <g fill="none" stroke="#fff" strokeWidth="1.600"><circle cx="19.500" cy="11" r="2.200" /><path d="M19.500 13v17M14 16h11M10 23c1 5 4 8 9.500 8s8.500-3 9.500-8M9 27l1-4 4 2M30 27l-1-4-4 2" /></g>
  </svg>
);

const Cabinet = () => (
  <svg width="38" height="38" viewBox="0 0 38 38"><path d="M8 2h22l2 3v29H6V5z" fill="#cfcfca" stroke="#888884" /><path d="M8.500 6h21v11h-21zM8.500 20h21v11h-21z" fill="#e8e8e4" stroke="#a1a19c" /><path d="M14 10h10v3H14zM14 23h10v3H14z" fill="#aaa9a4" stroke="#777" /><path d="M6 34h26v2H6z" fill="#888884" /></svg>
);

const Chrome = () => (
  <svg width="38" height="38" viewBox="0 0 38 38">
    <circle cx="19" cy="19" r="18.500" fill="#2f9a3f" />
    <path d="M3 10A18.500 18.500 0 0 1 36 12H19l-8 12z" fill="#d93d31" />
    <path d="M36 12A18.500 18.500 0 0 1 17 37.500L27 22l-3-10z" fill="#f7d02f" />
    <path d="M4 8l9 15 4 3 5 0-6 11.500C1 35-3 20 4 8z" fill="#36a446" />
    <circle cx="19" cy="16" r="8" fill="#f1f1ef" opacity=".35" /><circle cx="19" cy="16" r="6.500" fill="#2d75c9" /><path d="M13 14c2-5 10-5 12 0z" fill="#74adea" />
  </svg>
);

const Calculator = () => (
  <svg width="38" height="38" viewBox="0 0 38 38">
    <rect x="5.500" y="2.500" width="28" height="34" rx="1.500" fill="#9d9d99" stroke="#6d6d6a" /><path d="M8 5h23v7H8z" fill="#b4b6b0" />
    {[0, 1, 2, 3, 4].map((r) => [0, 1, 2, 3].map((c) => <rect key={`${r}${c}`} x={8 + c * 5} y={15 + r * 4} width="4" height="3" fill="#4a4a48" />))}
    <path d="M28 15h4v7h-4z" fill="#4a4a48" /><path d="M28 24h4v10h-4z" fill="#6f8aa3" />
  </svg>
);

const Editor = () => (
  <svg width="38" height="38" viewBox="0 0 38 38">
    <path d="M4.500 1.500h28v34h-28z" fill="#e9e9e6" stroke="#a9a9a5" />
    <path d="M8 6h8M8 10h20M8 13h18M8 16h20M8 19h14M8 24h10M8 27h8" stroke="#c9c9c4" strokeWidth="1.500" />
    <path d="M18 31l2-6 12-12 4 4-12 12z" fill="#474747" /><path d="M18 31l2-6 4 4z" fill="#efd36b" /><path d="M31 13l3-2 3 3-2 3z" fill="#dc89ad" />
  </svg>
);

const Trash = () => (
  <svg width="32" height="40" viewBox="0 0 32 40">
    <path d="M2.500 6h27l-3 30q-10 4-21 0z" fill="#363936" stroke="#787b78" />
    <path d="M4.500 18l4-3 4 2 4-3 4 3 4-2 3 4-2 16q-10 3-20 0z" fill="#dcdddb" />
    <path d="M8 20l3 5-2 7M15 18l2 6-3 8M22 19l-2 8 3 6" stroke="#c3c6c4" fill="none" strokeWidth="1.500" />
    <ellipse cx="16" cy="4.500" rx="15" ry="3.500" fill="#656966" stroke="#d2d4d2" strokeWidth="2" />
    <path d="M1 5v4h30V5" fill="none" stroke="#b5b8b5" strokeWidth="1.500" />
  </svg>
);

const Cursor = () => (
  <svg width="14" height="20" viewBox="0 0 14 20"><path d="M1 1v16l4-3 2 4.500q1.500 1 2.500-1L8 13h5z" fill="#fff" stroke="#000" strokeWidth="1.300" /></svg>
);

/* ---------- Content ---------- */

const Mnemonic = ({ text, at }: { text: string; at: number }) => (
  <span>{text.slice(0, at)}<u>{text[at]}</u>{text.slice(at + 1)}</span>
);

const menus: [string, number, number][] = [
  ["File", 0, 40], ["Edit", 0, 43], ["View", 0, 49], ["History", 2, 65], ["Delicious", 2, 77], ["Bookmarks", 0, 93], ["Tools", 0, 52], ["Help", 0, 40],
];

const tabs: { icon: React.ReactNode; title: string; active?: boolean }[] = [
  { icon: <Dashed />, title: "Wireframes" },
  { icon: <Arch />, title: "Vejle Idrætshøjskole | Bl…" },
  { icon: <Drupal />, title: "lsolesen | drupal.org" },
  { icon: <Drupal />, title: "Vejle Idrætshøjskole", active: true },
  { icon: <Sunburst />, title: "Home | Raised Eyebrow …" },
  { icon: <GitMark />, title: "drupalcode.org Git - pro…" },
];

const devTools: [string, number][] = [
  ["Disable", 95], ["Cookies", 98], ["CSS", 71], ["Forms", 88], ["Images", 93], ["Information", 127], ["Miscellaneous", 139], ["Outline", 94], ["Resize", 87], ["Tools", 82], ["View Source", 127], ["Options", 86],
];

const articles = [
  {
    title: "Boldspil",
    lines: [
      "Finder du det sjovest og mest inspirerende at bevæge dig sammen med andre i selskab med en bold og gerne med lidt konkurrence? Så er",
      "dette idrætsspeciale noget for dig, da vi beskæftiger os med et bredt udsnit af boldspil, fx beachvolley, fodbold, floorball og en række alternative",
      "boldspil, som battle og ballebold er på programmet. Undervisningen tager udgangspunkt i at deltagerne har lyst til at lade sig indfange i",
      "boldspillets glæder, men der er ingen færdighedskrav.",
    ],
  },
  {
    title: "Fitness",
    lines: [
      "Dette idrætsspeciale giver mulighed for at afprøve forskellige aktiviteter inden for fitnessverdenen. Vi udfordrer mænd og kvinder til en uge med",
      "inspiration og alsidige træningsformer. De fysiske aktiviteter indeholder funktionel træning, styrketræning, spinning, pulstræning, step,",
      "coretræning, effekt m.m. Derudover indeholder fitness input om sundhed og livsstils- relaterede emner. Undervisingen er tilrettelagt således, at",
      "alle - fra begynderen til den erfarne - tilgodeses på fitness.",
    ],
  },
  {
    title: "Adventure",
    lines: [
      "Faget adventure tager udgangspunkt i nærområdets fantastiske natur, primært skov og fjord. På fjorden vil vi benytte havkajakken og opleve",
      "glæden ved, næsten lydløst, at følge fjordkanten langs Vejle Fjord. I skoven vil vi klatre til toppen af træerne, ligesom vi på mountainbike vil",
      "udfordre vores teknik og mod, i en skov, som kan give udfordringer på alle niveauer.",
    ],
  },
];

const dockItems: { name: string; icon: React.ReactNode; active?: boolean }[] = [
  { name: "Docky", icon: <Anchor /> },
  { name: "Launcher", icon: <XMark s={38} /> },
  { name: "Terminal", icon: <svg width="39" height="38" viewBox="0 0 39 38"><g transform="translate(0 4)"><Terminal w={39} h={33} /></g></svg> },
  { name: "Files", icon: <Cabinet /> },
  { name: "Chrome", icon: <Chrome /> },
  { name: "Firefox", icon: <Firefox s={38} />, active: true },
  { name: "Calculator", icon: <Calculator /> },
  { name: "Thunderbird", icon: <Thunderbird s={38} /> },
  { name: "Pidgin", icon: <Pidgin s={38} bubble /> },
  { name: "Text editor", icon: <Editor /> },
];

export default function App() {
  return (
    <Desktop>
      <GlobalStyle />
      <TopPanel>
        <PanelGroup>
          <Slot $w={37} $center><UbuntuMark /></Slot>
          <SlotButton $w={101}>Applications</SlotButton>
          <SlotButton $w={59}>Places</SlotButton>
          <SlotButton $w={57}>System</SlotButton>
          <Slot $w={24} $center><Globe /></Slot>
          <Slot $w={24} $center><Pidgin /></Slot>
          <Slot $w={25} $center><Thunderbird /></Slot>
          <Slot $w={27} $center><XMark /></Slot>
          <Slot $w={66} $center><Picasa /></Slot>
          <Slot $w={18} $center><ScreenRuler /></Slot>
          <Slot $w={84} $center><Terminal /></Slot>
          <Slot $w={28} $center><Feet /></Slot>
        </PanelGroup>
        <PanelGroup>
          <Slot $w={8}><svg width="4" height="9" viewBox="0 0 4 9"><path d="M0 1h4M0 4.500h4M0 8h4" stroke="#a3978c" /></svg></Slot>
          <Slot $w={29}><PhoneStatus /></Slot>
          <Slot $w={21}><Bluetooth /></Slot>
          <Slot $w={29}><Wifi /></Slot>
          <Slot $w={35}><Battery /></Slot>
          <Slot $w={127}>Wed Nov&nbsp; 7, 11:09</Slot>
          <Slot $w={18}><PanelRule /></Slot>
          <Slot $w={23}><Bubble /></Slot>
          <SlotButton $w={74}>lsolesen</SlotButton>
          <SlotButton $w={25} aria-label="Power"><Power /></SlotButton>
          <Workspaces>
            <Workspace $active aria-label="Workspace 1"><Firefox s={16} /></Workspace>
            <Workspace aria-label="Workspace 2" />
            <Workspace aria-label="Workspace 3" />
            <Workspace aria-label="Workspace 4" />
          </Workspaces>
          <WindowsButton aria-label="Windows"><WindowList /></WindowsButton>
          <Slot $w={23}><Firefox /></Slot>
        </PanelGroup>
      </TopPanel>

      <TitleBar>
        <WindowButtons>
          <WindowButton aria-label="Close"><svg width="8" height="8" viewBox="0 0 8 8"><path d="M1 1l6 6M7 1L1 7" stroke="#fff" strokeWidth="2.200" /></svg></WindowButton>
          <WindowButton aria-label="Minimize"><svg width="8" height="8" viewBox="0 0 8 8"><path d="M0 7h8" stroke="#fff" strokeWidth="2" /></svg></WindowButton>
          <WindowButton aria-label="Maximize"><svg width="8" height="8" viewBox="0 0 8 8"><path d="M2 2h4v4H2z" stroke="#fff" strokeWidth="1.700" fill="none" /></svg></WindowButton>
        </WindowButtons>
        <WindowTitle>Vejle Idrætshøjskole - Mozilla Firefox</WindowTitle>
      </TitleBar>

      <MenuBar>
        {menus.map(([text, at, w]) => (
          <SlotButton key={text} $w={w}><Mnemonic text={text} at={at} /></SlotButton>
        ))}
      </MenuBar>

      <TabStrip>
        {tabs.map((t, i) => (
          <Tab key={i} $active={t.active}>
            {t.icon}
            <TabLabel>{t.title}</TabLabel>
            <button aria-label="Close tab"><CloseMark /></button>
          </Tab>
        ))}
        <NewTab aria-label="New tab"><Plus /></NewTab>
      </TabStrip>

      <NavBar>
        <SlotButton $w={36} aria-label="Back"><Arrow /></SlotButton>
        <SlotButton $w={36} aria-label="Forward"><Arrow off /></SlotButton>
        <SlotButton $w={38} aria-label="Delicious"><Checker /></SlotButton>
        <SlotButton $w={39} aria-label="Bookmarks"><BookmarkTile /></SlotButton>
        <SlotButton $w={36} aria-label="Tag"><TagTile /></SlotButton>
        <Field>
          <Globe s={15} grey />
          <UrlInput aria-label="Address" defaultValue="localhost/vih_dk_build/" />
          <FieldIcons><Star /><Chevron /><Reload /></FieldIcons>
        </Field>
        <NavTail>
          <SearchField $w={250}>
            <FieldIcons><SearchEngine /><Chevron /></FieldIcons>
            <TextInput aria-label="Search" placeholder="Google" />
            <Magnifier />
          </SearchField>
          <Slot $w={11} />
          <SlotButton $w={20} aria-label="Extension"><Asterisk /></SlotButton>
          <Slot $w={25}><Chevron /></Slot>
          <SlotButton $w={36} aria-label="Home"><Home /></SlotButton>
          <SlotButton $w={26} aria-label="Debugger"><Bug /></SlotButton>
          <Slot $w={18}><Chevron /></Slot>
          <SlotButton $w={26} aria-label="Colour picker"><Dropper /></SlotButton>
          <Slot $w={14}><Chevron /></Slot>
        </NavTail>
      </NavBar>

      <DevBar>
        <PanelGroup>
          {devTools.map(([name, w]) => (
            <DevItem key={name} $w={w}>
              <svg width="16" height="16" viewBox="0 0 16 16">{devIcons[name]}</svg>
              {name}
              <Chevron />
            </DevItem>
          ))}
        </PanelGroup>
        <Status><Check /><ErrorDot /><Check /></Status>
      </DevBar>

      <Viewport>
        <Document>
          <Column>
            <SiteTitle>Vejle Idrætshøjskole</SiteTitle>
            <Rule $short />
            <NavList>
              <li><Link href="#content">Content</Link></li>
              <li>Test</li>
            </NavList>
            <Rule />
            {articles.map((a) => (
              <Article key={a.title}>
                <ArticleTitle><Link href="#article">{a.title}</Link></ArticleTitle>
                <Paragraph>
                  {a.lines.map((line, i) => (
                    <React.Fragment key={i}>{i > 0 && <br />}{line}</React.Fragment>
                  ))}
                </Paragraph>
                <ReadMore><Link href="#more">Read more</Link></ReadMore>
              </Article>
            ))}
          </Column>
        </Document>
        <ScrollBar>
          <ScrollButton aria-label="Scroll up"><Chevron dir="up" s={7} c="#9d8f84" /></ScrollButton>
          <Track><Thumb /></Track>
          <ScrollButton aria-label="Scroll down"><Chevron s={8} /></ScrollButton>
        </ScrollBar>
        <Pointer><Cursor /></Pointer>
      </Viewport>

      <FindBar onSubmit={(e) => e.preventDefault()}>
        <FindAction type="button" $w={26} aria-label="Close find bar"><CloseMark /></FindAction>
        <FindLabel htmlFor="find">Find:</FindLabel>
        <FindField $w={211}><TextInput id="find" defaultValue="block" /></FindField>
        <FindAction type="button" $w={87}><Chevron dir="left" /><Mnemonic text="Previous" at={0} /></FindAction>
        <FindAction type="button" $w={60}><Chevron dir="right" /><Mnemonic text="Next" at={0} /></FindAction>
        <FindAction type="button" $w={110} $gap={2}><Highlighter /><Mnemonic text="Highlight all" at={10} /></FindAction>
        <CheckLabel><CheckBox type="checkbox" defaultChecked /><Mnemonic text="Match case" at={3} /></CheckLabel>
        <FindMessage><WrapIcon />Reached end of page, continued from top</FindMessage>
      </FindBar>

      <Dock>
        <DockGroup>
          {dockItems.map((d) => (
            <DockItem key={d.name} $active={d.active} aria-label={d.name}>{d.icon}<RunningDot /></DockItem>
          ))}
        </DockGroup>
        <Tray><TrayRule /><Trash /><Wifi w={28} c="#6c6c6c" /></Tray>
      </Dock>
    </Desktop>
  );
}
